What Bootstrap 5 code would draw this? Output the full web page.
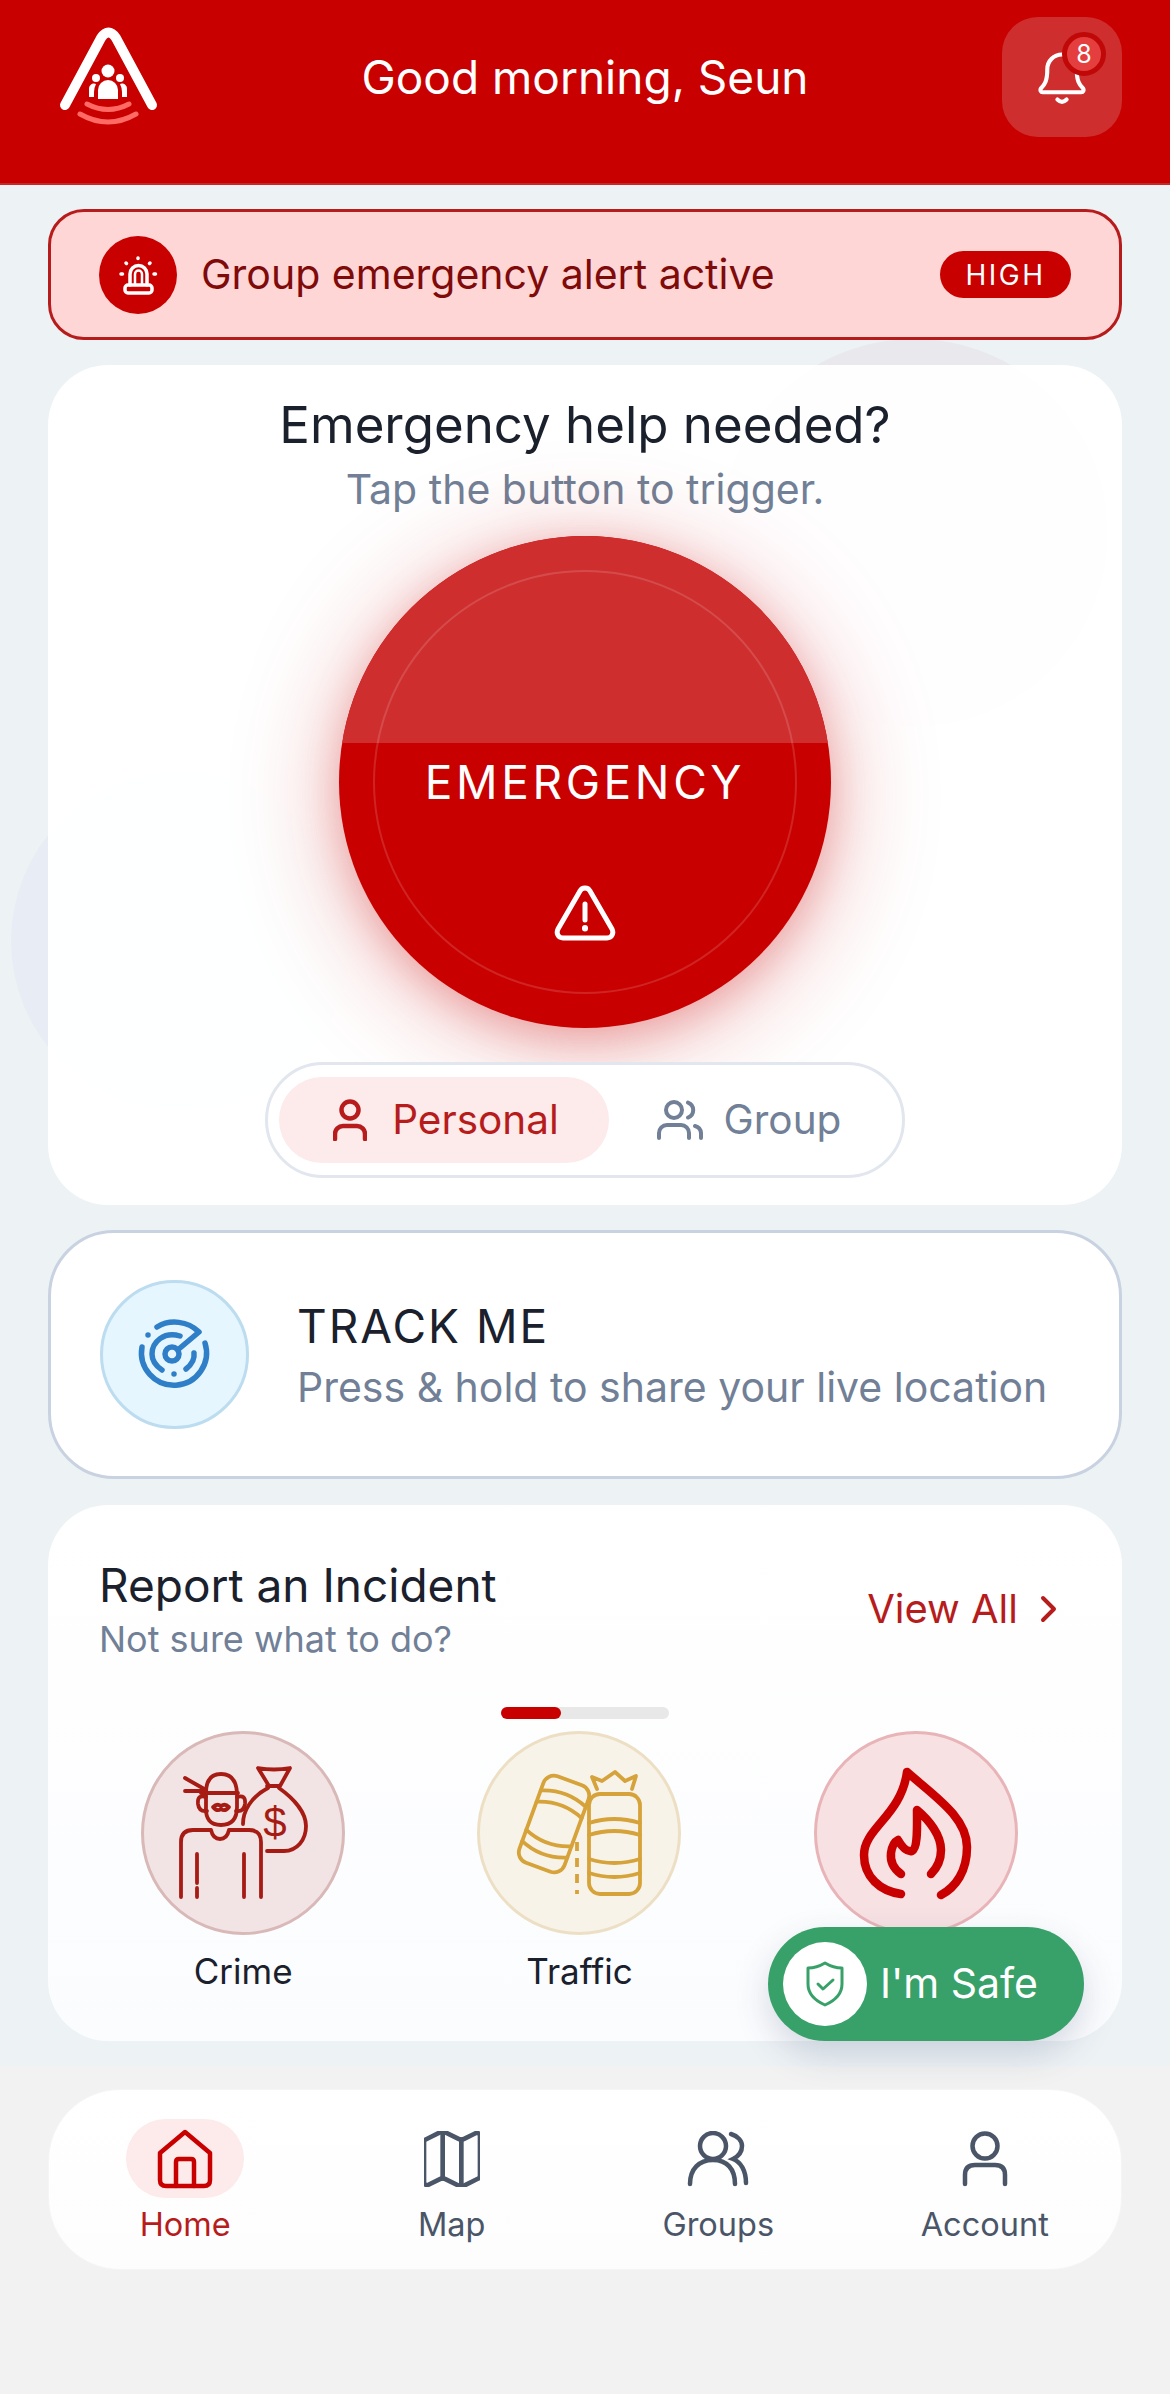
<!DOCTYPE html>
<html lang="en">
  <head>
    <meta charset="UTF-8" />
    <title>Home</title>
    <link href="https://cdn.jsdelivr.net/npm/bootstrap@5.3.0/dist/css/bootstrap.min.css" rel="stylesheet" />
    <style>
      html, body { margin: 0; background: #f2f2f2; }
      body { font-family: Inter, "Liberation Sans", sans-serif; width: 1170px; height: 2394px; overflow: hidden; color: #1a202c; }
      svg { display: block; }

      .top-bar { height: 185px; background: #c90000; padding: 17px 48px 0; border-bottom: 2px solid #c42a2a; }
      .top-logo { width: 120px; height: 120px; }
      .top-title { color: #fff; font-size: 46px; line-height: 120px; }
      .bell-box { width: 120px; height: 120px; border-radius: 36px; background: #cf2e2e; }
      .bell-count { top: 15px; right: 16px; width: 44px; height: 44px; background: #e53e3e; border: 5px solid #c00808; color: #fff; font-size: 25px; line-height: 1; }

      .home-main { background: #edf2f5; padding: 24px 48px; height: 1881px; overflow: visible; }
      .blob { z-index: 0; }
      .blob-a { width: 388px; height: 388px; left: 720px; top: 154px; background: #e9e8ec; }
      .blob-b { width: 340px; height: 340px; left: 11px; top: 586px; background: #e8ecf5; }

      .alert-bar { height: 131px; background: #ffd6d6; border: 3px solid #b71c1c; border-radius: 36px; padding: 0 48px; gap: 24px; z-index: 1; }
      .alert-icon { width: 78px; height: 78px; background: #c90000; }
      .alert-text { font-size: 41px; color: #7f0a0a; }
      .high-pill { width: 131px; height: 47px; background: #c90000; color: #fff; font-size: 28px; letter-spacing: 2.500px; }

      .hero { margin-top: 25px; height: 840px; border-radius: 60px; background: rgba(255,255,255,.96); padding-top: 36px; z-index: 1; }
      .hero-title { font-size: 51px; line-height: 48px; margin: 0; font-weight: 400; }
      .hero-sub { font-size: 41px; line-height: 44px; margin: 18px 0 0; color: #718096; }
      .sos { width: 492px; height: 492px; margin: 25px auto 0; background: #c90000; color: #fff; box-shadow: 0 14px 110px rgba(201,0,0,.3), 0 10px 40px rgba(201,0,0,.22); overflow: hidden; padding-top: 221px; }
      .sos-sheen { top: 0; left: 0; right: 0; height: 207px; background: #cf2e2e; }
      .sos-ring { inset: 34px; border: 2px solid rgba(255,255,255,.14); }
      .sos-word { font-size: 46px; line-height: 50px; letter-spacing: 3.600px; z-index: 1; }
      .sos-icon { margin-top: 78px; z-index: 1; }
      .mode-switch { width: 640px; height: 116px; margin: 34px auto 0; border: 3px solid #e2e6ee; background: #fff; padding: 0 11px; }
      .mode-on { width: 330px; height: 86px; background: #fdeaea; color: #b71c1c; font-size: 40.500px; gap: 25px; padding-left: 4px; }
      .mode-off { flex: 1; color: #718096; font-size: 40.500px; gap: 21px; padding-left: 2px; padding-right: 4px; }

      .track-card { margin-top: 25px; height: 249px; border: 3px solid #c9d2e0; border-radius: 66px; background: #fff; padding-left: 49px; gap: 48px; z-index: 1; }
      .track-icon { width: 149px; height: 149px; background: #e6f6ff; border: 3px solid #bcdcf0; }
      .track-title { font-size: 46px; line-height: 50px; letter-spacing: 2px; padding-top: 3px; }
      .track-sub { font-size: 41px; line-height: 50px; color: #718096; margin-top: 11px; }

      .report-card { margin-top: 26px; height: 536px; border-radius: 60px; background: linear-gradient(#fff, #fbfcfe); padding: 54px 52px 0 52px; z-index: 1; }
      .report-title { font-size: 46px; line-height: 52px; margin: 0 0 0 -1px; font-weight: 400; }
      .report-sub { font-size: 36px; line-height: 40px; margin: 8px 0 0 -1px; color: #718096; }
      .view-all { color: #b71c1c; font-size: 40px; gap: 22px; padding-right: 12px; }
      .slide-track { width: 168px; height: 12px; margin: 48px auto 0; background: #e8e8e8; }
      .slide-fill { width: 60px; height: 12px; background: #c90000; }
      .tile-row { margin: 12px -14px 0 -25px; }
      .tile { flex: 1 1 0; }
      .tile-round { width: 204px; height: 204px; margin: 0 auto; border: 3px solid; }
      .tile-crime { background: #f2e4e4; border-color: #d9b8b8; }
      .tile-traffic { background: #f8f3e8; border-color: #ecdfc4; }
      .tile-fire { background: #f7e1e3; border-color: #e8b4b8; }
      .tile-label { font-size: 35px; line-height: 40px; margin-top: 16px; min-height: 40px; }

      .safe-btn { right: 38px; bottom: 0; width: 316px; height: 114px; background: #38a169; color: #fff; font-size: 41px; padding-left: 15px; gap: 13px; box-shadow: 0 14px 34px rgba(40,60,100,.18); z-index: 3; }
      .safe-disc { width: 84px; height: 84px; background: #fff; }

      .bottom-nav { margin: 23px 48px 0; height: 181px; border-radius: 72px; background: linear-gradient(#fff, #fdfdfd); padding: 29px 3px 0; border: 1px solid #f5f5f5; }
      .nav-cell { flex: 1 1 0; color: #4a5568; font-size: 32.500px; line-height: 40px; }
      .nav-icon { width: 118px; height: 79px; border-radius: 40px; margin-bottom: 7px; }
      .nav-on { color: #b71c1c; }
      .nav-on .nav-icon { background: #fdeaea; }
    </style>
  </head>
  <body>
    <header class="top-bar d-flex justify-content-between align-items-start">
      <svg class="top-logo" viewBox="48 17 120 120" fill="none">
        <path d="M65 105 101 38Q108.500 27 116 38L152 105" stroke="#fff" stroke-width="10" stroke-linecap="round" stroke-linejoin="round" />
        <circle cx="108" cy="71" r="6.500" fill="#fff" />
        <path d="M98 99V90a10 10 0 0 1 20 0v9z" fill="#fff" />
        <circle cx="96" cy="78" r="4" fill="#fff" />
        <circle cx="120" cy="78" r="4" fill="#fff" />
        <path d="M89 97V89a5 5 0 0 1 7-5q-2 4-2 8v5zM127 97V89a5 5 0 0 0-7-5q2 4 2 8v5z" fill="#fff" />
        <path d="M87 104Q108 115 129 104M80 114Q108 130 136 114" stroke="#ff6a65" stroke-width="5" stroke-linecap="round" />
      </svg>
      <div class="top-title flex-grow-1 text-center">Good morning, Seun</div>
      <div class="bell-box position-relative d-flex align-items-center justify-content-center">
        <svg width="48" height="57" viewBox="0 0 52 62" fill="none" stroke="#fff" stroke-width="4.500" stroke-linecap="round" stroke-linejoin="round">
          <path d="M3 43c4-4 7-8 7-21a16 16 0 0 1 32 0c0 13 3 17 7 21 1 2 0 4-2 4H5c-2 0-3-2-2-4z" />
          <path d="M21 55q5 5 10 0" />
        </svg>
        <span class="bell-count position-absolute rounded-circle d-flex align-items-center justify-content-center">8</span>
      </div>
    </header>

    <main class="home-main position-relative">
      <div class="blob blob-a position-absolute rounded-circle"></div>
      <div class="blob blob-b position-absolute rounded-circle"></div>

      <section class="alert-bar d-flex align-items-center position-relative">
        <span class="alert-icon rounded-circle d-flex align-items-center justify-content-center">
          <svg width="60" height="60" viewBox="13 15 60 60" fill="none" stroke="#fff" stroke-width="3.500" stroke-linecap="round" stroke-linejoin="round">
            <path d="M35 55V44a8.500 8.500 0 0 1 17 0v11" />
            <path d="M40 55V44a3.500 3.500 0 0 1 7 0v11" stroke-width="2.500" />
            <rect x="30" y="55" width="27" height="8" rx="3" />
            <path d="M43 28v.5M31 33l.5.5M55 33l-.5.5M26 44h1.500M59 44h1.500" />
          </svg>
        </span>
        <span class="alert-text flex-grow-1">Group emergency alert active</span>
        <span class="high-pill rounded-pill d-flex align-items-center justify-content-center">HIGH</span>
      </section>

      <section class="hero position-relative text-center">
        <h1 class="hero-title">Emergency help needed?</h1>
        <p class="hero-sub">Tap the button to trigger.</p>
        <div class="sos position-relative rounded-circle d-flex flex-column align-items-center">
          <div class="sos-sheen position-absolute"></div>
          <div class="sos-ring position-absolute rounded-circle"></div>
          <span class="sos-word position-relative">EMERGENCY</span>
          <svg class="sos-icon position-relative" width="62" height="56" viewBox="0 0 62 56" fill="none" stroke="#fff" stroke-width="5" stroke-linecap="round" stroke-linejoin="round">
            <path d="M26 6 4 44c-2 4 0 9 5 9h44c5 0 7-5 5-9L36 6c-2-4-8-4-10 0z" />
            <path d="M31 19v16" />
            <path d="M31 43v.5" stroke-width="6" />
          </svg>
        </div>
        <div class="mode-switch position-relative rounded-pill d-flex align-items-center">
          <div class="mode-on rounded-pill d-flex align-items-center justify-content-center">
            <svg width="34" height="42" viewBox="0 0 34 42" fill="none" stroke="#b71c1c" stroke-width="4.500" stroke-linecap="round">
              <circle cx="17" cy="11" r="8.500" />
              <path d="M2 40v-5a8 8 0 0 1 8-8h14a8 8 0 0 1 8 8v5" />
            </svg>
            <span>Personal</span>
          </div>
          <div class="mode-off d-flex align-items-center justify-content-center">
            <svg width="46" height="40" viewBox="0 0 46 40" fill="none" stroke="#718096" stroke-width="4" stroke-linecap="round">
              <circle cx="17" cy="10" r="8" />
              <path d="M2 38v-5a8 8 0 0 1 8-8h14a8 8 0 0 1 8 8v5" />
              <path d="M31 2.500a8 8 0 0 1 0 15M38 26a8 8 0 0 1 6 7v5" />
            </svg>
            <span>Group</span>
          </div>
        </div>
      </section>

      <section class="track-card d-flex align-items-center position-relative">
        <span class="track-icon rounded-circle d-flex align-items-center justify-content-center flex-shrink-0">
          <svg width="110" height="110" viewBox="0 0 110 110" fill="none" stroke="#2f7fc8" stroke-width="5.500" stroke-linecap="round" stroke-linejoin="round">
            <path d="M22 47A32.500 32.500 0 1 0 85 43" />
            <path d="M37 27C50 19 68 21 79 32L60 48" />
            <path d="M60 36C44 31 32 42 32 54 32 60 36 66 42 70" />
            <path d="M74 53C75 60 71 65 66 69" />
            <circle cx="52" cy="54" r="7" />
            <circle cx="28" cy="35" r="1.500" fill="#2f7fc8" stroke-width="2.500" />
            <circle cx="54" cy="74" r="1.500" fill="#2f7fc8" stroke-width="2.500" />
          </svg>
        </span>
        <div>
          <div class="track-title">TRACK ME</div>
          <div class="track-sub">Press &amp; hold to share your live location</div>
        </div>
      </section>

      <section class="report-card position-relative">
        <div class="d-flex justify-content-between align-items-center">
          <div>
            <h2 class="report-title">Report an Incident</h2>
            <p class="report-sub">Not sure what to do?</p>
          </div>
          <div class="view-all d-flex align-items-center">
            <span>View All</span>
            <svg width="18" height="28" viewBox="0 0 18 28" fill="none" stroke="#b71c1c" stroke-width="4" stroke-linecap="round" stroke-linejoin="round"><path d="M3 3l11 11L3 25" /></svg>
          </div>
        </div>
        <div class="slide-track rounded-pill"><div class="slide-fill rounded-pill"></div></div>
        <div class="tile-row d-flex">
          <div class="tile text-center">
            <div class="tile-round tile-crime rounded-circle">
              <svg width="198" height="198" viewBox="3 3 198 198" fill="none" stroke="#a61c14" stroke-width="3.800" stroke-linecap="round" stroke-linejoin="round">
                <path d="M40 166V111q0-12 12-12H70q2 9 9 9t9-9H108q12 0 12 12v55" />
                <path d="M56 123v29M56 157v9M103 123v43" />
                <path d="M65 62q0-19 15-19t16 19v14q0 18-16 18T65 76z" />
                <path d="M65 66q-9-3-8 7 1 8 9 7M96 66q9-3 8 7-1 8-9 7" />
                <path d="M60 62H97M65 59 44 47M65 60H44" />
                <path d="M72 76q4-4 8-1 4-3 8 1-4 5-8 2-4 3-8-2z" />
                <path d="M117 37q16 3 32 0l-10 18h-11zM126 55h12" />
                <path d="M127 57C110 66 102 80 102 93M138 57c14 10 27 24 27 38 0 14-9 25-22 25h-17" />
                <text x="134" y="106" font-family="Liberation Sans, sans-serif" font-size="42" text-anchor="middle" fill="#a61c14" stroke="none">$</text>
              </svg>
            </div>
            <div class="tile-label">Crime</div>
          </div>
          <div class="tile text-center">
            <div class="tile-round tile-traffic rounded-circle">
              <svg width="198" height="198" viewBox="3 3 198 198" fill="none" stroke="#d6a23a" stroke-width="3.800" stroke-linecap="round" stroke-linejoin="round">
                <g transform="rotate(20 77 93)">
                  <rect x="53" y="47" width="48" height="92" rx="11" />
                  <path d="M53 66q24-10 48 0M53 78q24-10 48 0M53 108q24 10 48 0M53 120q24 10 48 0" />
                </g>
                <rect x="112" y="63" width="51" height="100" rx="11" />
                <path d="M112 92q25-8 51 0M112 104q25-8 51 0M112 128q25 8 51 0M112 142q25 8 51 0" />
                <path d="M120 58 115 46l10 4 13-9 10 9 11-5-4 13" />
                <path d="M100 111v52" stroke-dasharray="9 7" stroke-linecap="butt" />
              </svg>
            </div>
            <div class="tile-label">Traffic</div>
          </div>
          <div class="tile text-center">
            <div class="tile-round tile-fire rounded-circle">
              <svg width="198" height="198" viewBox="3 3 198 198" fill="none" stroke="#c90000" stroke-width="8.500" stroke-linecap="round" stroke-linejoin="round">
                <path d="M87 163C66 160 50 146 50 124 50 97 87 85 93 41 120 65 153 86 153 116 153 140 142 156 127 164" />
                <path d="M87 143C80 138 76 131 77 122 78 115 80 111 84 109 88 116 93 121 98 120 104 117 103 95 103 79 115 89 127 104 127 119 127 128 123 137 117 143" />
              </svg>
            </div>
            <div class="tile-label"></div>
          </div>
        </div>
        <div class="safe-btn position-absolute rounded-pill d-flex align-items-center">
          <span class="safe-disc rounded-circle d-flex align-items-center justify-content-center">
            <svg width="40" height="46" viewBox="0 0 40 46" fill="none" stroke="#38a169" stroke-width="3" stroke-linecap="round" stroke-linejoin="round">
              <path d="M20 2c5 3 11 5 17 5v16c0 11-8 17-17 21C11 40 3 34 3 23V7c6 0 12-2 17-5z" />
              <path d="M13 23l5 5 10-9" />
            </svg>
          </span>
          <span>I'm Safe</span>
        </div>
      </section>
    </main>

    <nav class="bottom-nav d-flex">
      <div class="nav-cell nav-on d-flex flex-column align-items-center">
        <span class="nav-icon d-flex align-items-center justify-content-center">
          <svg width="56" height="60" viewBox="0 0 56 60" fill="none" stroke="#c90000" stroke-width="4.500" stroke-linejoin="round" stroke-linecap="round">
            <path d="M3 24 28 3l25 21v27q0 6-6 6H9q-6 0-6-6z" />
            <path d="M19 57V33q0-3 3-3h12q3 0 3 3v24" />
          </svg>
        </span>
        <span>Home</span>
      </div>
      <div class="nav-cell d-flex flex-column align-items-center">
        <span class="nav-icon d-flex align-items-center justify-content-center">
          <svg width="56" height="56" viewBox="3 3 18 18" fill="none" stroke="#4a5568" stroke-width="1.500" stroke-linejoin="round" stroke-linecap="round">
            <path d="M14.106 5.553a2 2 0 0 0 1.788 0l3.659-1.830A1 1 0 0 1 21 4.619v12.764a1 1 0 0 1-.553.894l-4.553 2.277a2 2 0 0 1-1.788 0l-4.212-2.106a2 2 0 0 0-1.788 0l-3.659 1.830A1 1 0 0 1 3 19.381V6.618a1 1 0 0 1 .553-.894l4.553-2.277a2 2 0 0 1 1.788 0z" />
            <path d="M15 5.764v15M9 3.236v15" />
          </svg>
        </span>
        <span>Map</span>
      </div>
      <div class="nav-cell d-flex flex-column align-items-center">
        <span class="nav-icon d-flex align-items-center justify-content-center">
          <svg width="62" height="56" viewBox="0 0 62 56" fill="none" stroke="#4a5568" stroke-width="4.500" stroke-linecap="round">
            <circle cx="26" cy="15" r="13" />
            <path d="M3 53C3 38 12 29 26 29s22 9 22 24" />
            <path d="M44 3c7 2 11 7 11 12 0 5-3 10-9 13 8 3 13 12 13 24" />
          </svg>
        </span>
        <span>Groups</span>
      </div>
      <div class="nav-cell d-flex flex-column align-items-center">
        <span class="nav-icon d-flex align-items-center justify-content-center">
          <svg width="46" height="56" viewBox="0 0 46 56" fill="none" stroke="#4a5568" stroke-width="4.500" stroke-linecap="round">
            <circle cx="23" cy="15" r="12.500" />
            <path d="M3 53V44q0-10 10-10h20q10 0 10 10v9" />
          </svg>
        </span>
        <span>Account</span>
      </div>
    </nav>
    <script src="https://cdn.jsdelivr.net/npm/bootstrap@5.3.0/dist/js/bootstrap.bundle.min.js"></script>
  </body>
</html>
